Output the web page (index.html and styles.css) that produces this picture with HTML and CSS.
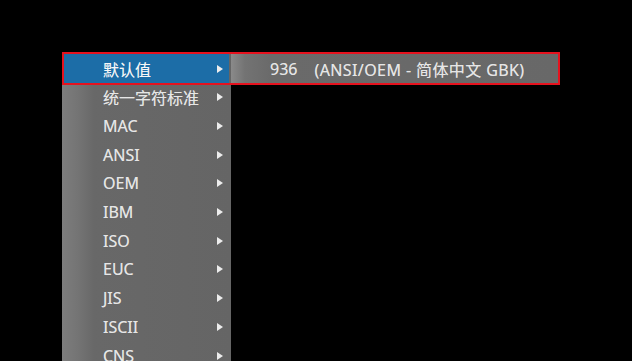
FILE: index.html
```html
<!DOCTYPE html>
<html lang="zh-CN">
<head>
<meta charset="utf-8">
<title>编码菜单</title>
<link rel="stylesheet" href="styles.css">
</head>
<body>
<div class="stage">
  <div class="menu">
    <div class="item active"><span class="label">默认值</span><span class="arrow"></span></div>
    <div class="item"><span class="label">统一字符标准</span><span class="arrow"></span></div>
    <div class="item"><span class="label">MAC</span><span class="arrow"></span></div>
    <div class="item"><span class="label">ANSI</span><span class="arrow"></span></div>
    <div class="item"><span class="label">OEM</span><span class="arrow"></span></div>
    <div class="item"><span class="label">IBM</span><span class="arrow"></span></div>
    <div class="item"><span class="label">ISO</span><span class="arrow"></span></div>
    <div class="item"><span class="label">EUC</span><span class="arrow"></span></div>
    <div class="item"><span class="label">JIS</span><span class="arrow"></span></div>
    <div class="item"><span class="label">ISCII</span><span class="arrow"></span></div>
    <div class="item"><span class="label">CNS</span><span class="arrow"></span></div>
  </div>
  <div class="submenu">
    <span class="code">936</span><span class="desc">(ANSI/OEM - 简体中文 GBK)</span>
  </div>
  <div class="highlight-box"></div>
</div>
</body>
</html>
```

FILE: styles.css
```css
html, body {
  margin: 0;
  padding: 0;
  background: #000;
  overflow: hidden;
  height: 361px;
}

.stage {
  position: relative;
  display: flex;
  align-items: flex-start;
  padding: 52px 0 0 62px;
  font-family: "Noto Sans", "Noto Sans CJK SC", sans-serif;
  font-size: 16px;
}

.menu {
  width: 165px;
  padding: 2px 2px 0 2px;
  background: linear-gradient(to right, #7d7d7d 0, #747474 16px, #686868 32px, #656565 100%);
  height: 307px;
}

.item {
  display: flex;
  align-items: center;
  height: 28.7px;
  padding-left: 39px;
  padding-right: 6px;
  color: #e6e6e6;
  text-shadow: 0 0 0.6px rgba(255, 255, 255, 0.5);
}

.item.active {
  height: 29px;
  background: #1c6da7;
  color: #f6f6f6;
}

.label {
  flex: 1;
  white-space: nowrap;
}

.arrow {
  width: 0;
  height: 0;
  border-top: 4.5px solid transparent;
  border-bottom: 4.5px solid transparent;
  border-left: 6px solid #ededed;
}

.submenu {
  margin-top: 2px;
  width: 329px;
  height: 29px;
  display: flex;
  align-items: center;
  padding-left: 39px;
  box-sizing: border-box;
  background: linear-gradient(to right, #8a8a8a 0, #737373 14px, #6a6a6a 40px, #686868 100%);
  color: #e6e6e6;
  text-shadow: 0 0 0.6px rgba(255, 255, 255, 0.5);
}

.code {
  margin-right: 17px;
}

.desc {
  white-space: nowrap;
  letter-spacing: 0.4px;
}

.highlight-box {
  position: absolute;
  left: 62px;
  top: 52px;
  width: 494px;
  height: 29px;
  border: 2px solid #e6121e;
  pointer-events: none;
}
```
